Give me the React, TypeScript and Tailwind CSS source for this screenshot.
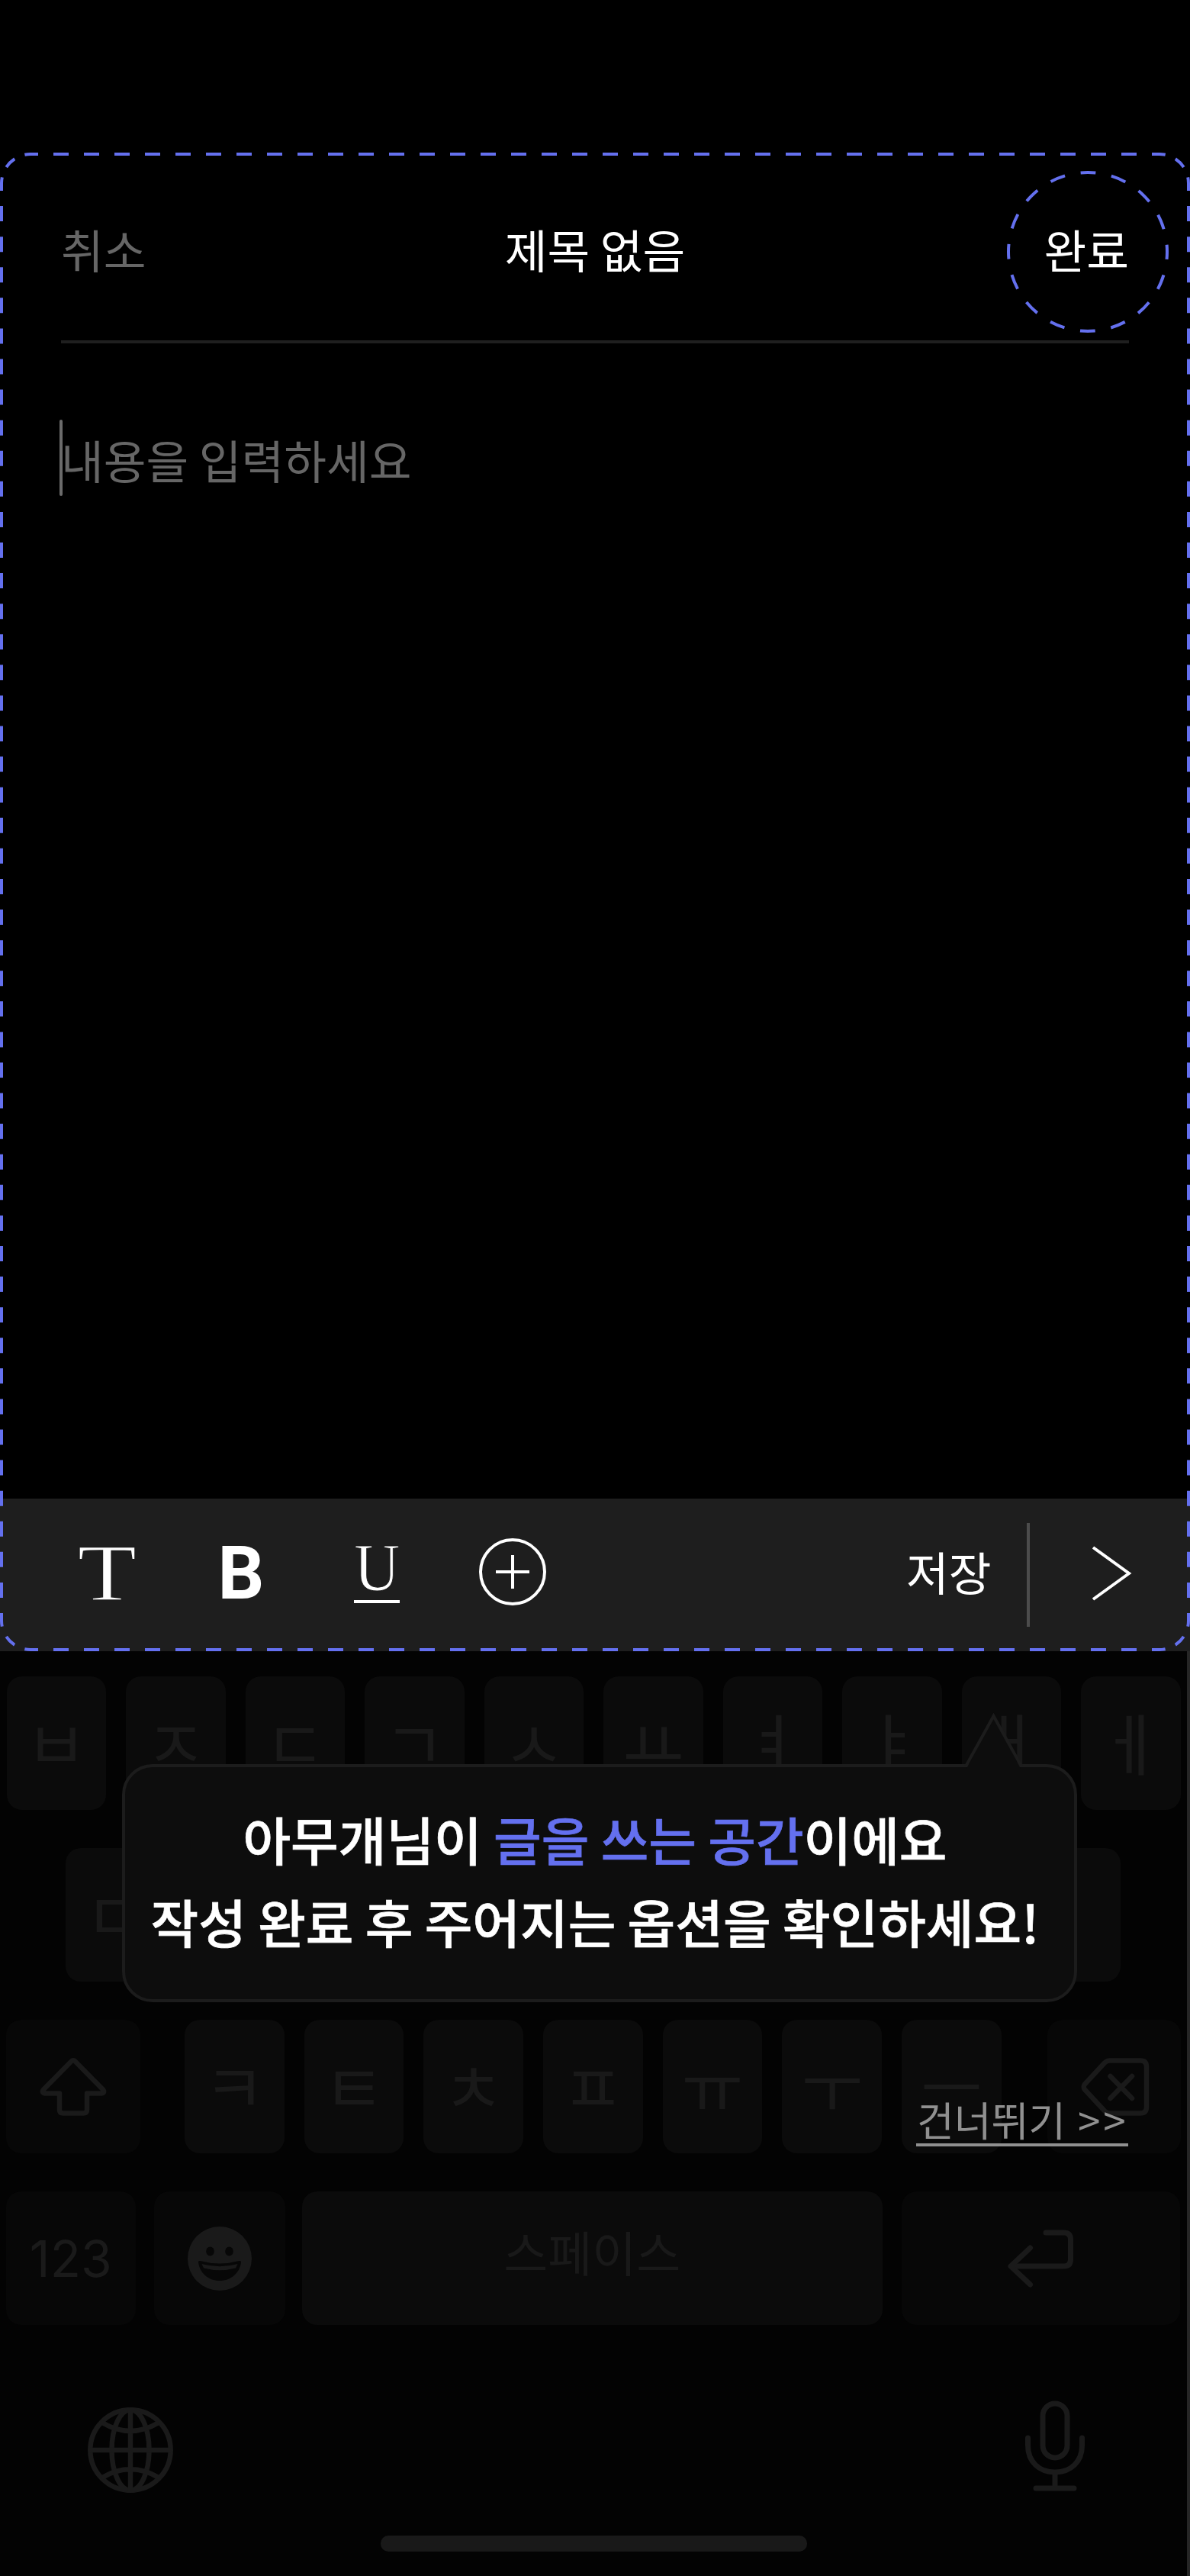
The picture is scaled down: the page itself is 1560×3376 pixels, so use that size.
import React from "react";

const KR = "font-['Noto_Sans_CJK_KR',sans-serif]";

function DashedFrame() {
  const line = { stroke: "#6470EF", strokeWidth: 4, fill: "none" };
  return (
    <svg
      className="pointer-events-none absolute left-0 top-0"
      width="1560"
      height="1964"
      viewBox="0 0 1560 1964"
    >
      <g {...line} strokeDasharray="20 20" strokeDashoffset="10">
        <path d="M40 2H1520" />
        <path d="M40 1962H1520" />
      </g>
      <g {...line} strokeDasharray="20 20.085" strokeDashoffset="10">
        <path d="M2 40V1924" />
        <path d="M1558 40V1924" />
      </g>
      <g {...line} strokeDasharray="15.5 14.34" strokeDashoffset="7.75">
        <path d="M2 40A38 38 0 0 1 40 2" />
        <path d="M1520 2A38 38 0 0 1 1558 40" />
        <path d="M1558 1924A38 38 0 0 1 1520 1962" />
        <path d="M40 1962A38 38 0 0 1 2 1924" />
      </g>
      <circle
        {...line}
        cx="1426"
        cy="130"
        r="104"
        strokeDasharray="20 20.84"
        strokeDashoffset="10"
      />
    </svg>
  );
}

function PlusCircle() {
  return (
    <svg width="88" height="88" viewBox="0 0 88 88" fill="none" stroke="#fff" strokeWidth="4">
      <circle cx="44" cy="44" r="42" />
      <path d="M22 44H66M44 22V66" />
    </svg>
  );
}

function Key({
  children,
  className = "w-[130.5px]",
  dark = false,
}: {
  children?: React.ReactNode;
  className?: string;
  dark?: boolean;
}) {
  return (
    <div
      className={`flex h-[175px] shrink-0 items-center justify-center rounded-[20px] ${
        dark ? "bg-[#070707]" : "bg-[#0b0b0b]"
      } ${className}`}
    >
      {children}
    </div>
  );
}

function Jamo({ children }: { children: string }) {
  return <span className={`${KR} mb-2 text-[88px] leading-none text-[#191919]`}>{children}</span>;
}

const ICON = "#1a1a1a";

function Keyboard() {
  return (
    <section className="relative h-[1212px] bg-[#030303] border-r-4 border-[#262626]">
      <div className="flex flex-col gap-[50px] pt-[33px]">
        <div className="flex gap-[26px] pl-[8.5px]">
          {["ㅂ", "ㅈ", "ㄷ", "ㄱ", "ㅅ", "ㅛ", "ㅕ", "ㅑ", "ㅐ", "ㅔ"].map((k) => (
            <Key key={k}>
              <Jamo>{k}</Jamo>
            </Key>
          ))}
        </div>
        <div className="flex gap-[26px] pl-[86px]">
          {["ㅁ", "ㄴ", "ㅇ", "ㄹ", "ㅎ", "ㅗ", "ㅓ", "ㅏ", "ㅣ"].map((k) => (
            <Key key={k}>
              <Jamo>{k}</Jamo>
            </Key>
          ))}
        </div>
        <div className="flex pl-2">
          <Key dark className="mr-[58.5px] w-[175.5px]">
            <svg width="88" height="78" viewBox="0 0 88 78" fill="none" stroke={ICON} strokeWidth="6.5" strokeLinejoin="round">
              <path d="M41.5 5.5Q44 3 46.500 5.500L83 42.500Q86 46.500 81 47.500H62V69Q62 73.500 57.500 73.500H30.500Q26 73.500 26 69V47.500H7Q2 46.500 5 42.500Z" />
            </svg>
          </Key>
          <div className="flex gap-[26.2px]">
            {["ㅋ", "ㅌ", "ㅊ", "ㅍ", "ㅠ", "ㅜ", "ㅡ"].map((k) => (
              <Key key={k}>
                <Jamo>{k}</Jamo>
              </Key>
            ))}
          </div>
          <Key dark className="ml-[60px] w-[175px]">
            <svg width="90" height="76" viewBox="0 0 90 76" fill="none" stroke={ICON} strokeWidth="6.500" strokeLinecap="round" strokeLinejoin="round" className="-mr-1">
              <path d="M38 3.500H78Q86 3.500 86 11.500V64.500Q86 72.500 78 72.500H38Q34 72.500 31 69.500L5 41.500Q2.500 38 5 34.500L31 6.500Q34 3.500 38 3.500Z" />
              <path d="M38.500 24L67 53M67 24L38.500 53" />
            </svg>
          </Key>
        </div>
        <div className="flex pl-2">
          <Key dark className="mr-6 w-[169.500px]">
            <span className="font-['Inter',sans-serif] text-[66px] leading-none text-[#1a1a1a]">123</span>
          </Key>
          <Key dark className="mr-[22px] w-[172.500px]">
            <svg width="84" height="84" viewBox="0 0 84 84">
              <circle cx="42" cy="42" r="42" fill={ICON} />
              <ellipse cx="29.500" cy="32.500" rx="5.300" ry="6" fill="#070707" />
              <ellipse cx="54.500" cy="32.500" rx="5.300" ry="6" fill="#070707" />
              <path d="M14 47Q13.500 44.500 16.500 45Q42 52 67.500 45Q70.500 44.500 70 47C68 61 57 71 42 71S16 61 14 47Z" fill="#070707" />
              <path d="M18.500 49Q42 55.500 65.500 49L63 54.500Q42 60 21 54.500Z" fill={ICON} />
            </svg>
          </Key>
          <Key className="mr-[25.500px] w-[760.500px]">
            <span className={`${KR} mb-[20px] text-[63px] leading-none text-[#191919]`}>스페이스</span>
          </Key>
          <Key dark className="w-[364.500px]">
            <svg width="88" height="78" viewBox="0 0 88 78" fill="none" stroke={ICON} strokeWidth="7" strokeLinecap="round" strokeLinejoin="round">
              <path d="M51 5H74.500Q83.500 5 83.500 14V40Q83.500 49 74.500 49H6" />
              <path d="M30.500 25L5 49L30.500 73" />
            </svg>
          </Key>
        </div>
      </div>

      <div className="mt-[98px] flex justify-between pl-[115px] pr-[134px]">
        <svg width="112" height="112" viewBox="0 0 112 112" fill="none" stroke={ICON} strokeWidth="6.500" className="mt-[10px]">
          <circle cx="56" cy="56" r="52.700" />
          <ellipse cx="56" cy="56" rx="24.500" ry="52.700" />
          <path d="M56 3V109M3 56H109M19 20Q56 42 93 20M19 92Q56 70 93 92" />
        </svg>
        <svg width="78" height="120" viewBox="0 0 78 120" fill="none" stroke={ICON} strokeWidth="7" strokeLinecap="round">
          <rect x="23" y="5" width="32" height="71" rx="16" />
          <path d="M3.500 50V60C3.500 81 18 95 39 95S74.500 81 74.500 60V50M39 95V116M14 116H64" />
        </svg>
      </div>
      <div className="absolute left-[499px] top-[1159px] h-[21px] w-[559px] rounded-[10px] bg-[#191919]" />

      <div className="absolute left-[160px] top-[148px] flex h-[312px] w-[1252px] flex-col items-center rounded-[40px] border-4 border-[#1c1c1c] bg-[#0d0d0d]">
        <svg className="absolute left-[1098px] top-[-72px]" width="84" height="76" viewBox="0 0 84 76">
          <path d="M4 76L40.500 5L77 76Z" fill="#0d0d0d" />
          <path d="M4.500 70L40.500 5L76.500 70" fill="none" stroke="#1c1c1c" strokeWidth="4" />
        </svg>
        <div className={`${KR} mr-3 mt-10 whitespace-nowrap text-center text-[68.1px] font-medium leading-[108px] text-white [-webkit-text-stroke:0.7px_currentColor]`}>
          <p>
            아무개님이 <span className="text-[#6470EF]">글을 쓰는 공간</span>이에요
          </p>
          <p>작성 완료 후 주어지는 옵션을 확인하세요!</p>
        </div>
      </div>

      <button className={`${KR} absolute left-[1201px] top-[581px] w-[278px] whitespace-nowrap border-b-4 border-[#909090] pl-px text-left text-[53px] leading-[64px] text-[#909090]`}>
        건너뛰기<span className="tracking-[4px]"> &gt;&gt;</span>
      </button>
    </section>
  );
}

export default function App() {
  return (
    <main className={`${KR} h-[3376px] w-[1560px] overflow-hidden bg-black pt-[200px]`}>
      <section className="relative flex h-[1964px] flex-col">
        <header className="mx-20 flex h-[250px] items-center justify-between border-b-4 border-[#1f1f1f] pt-[6px] text-[60.6px] leading-[88px] text-white">
          <span className="w-[300px] text-[#666]">취소</span>
          <h1 className="font-normal">제목 없음</h1>
          <span className="w-[300px] text-right">완료</span>
        </header>
        <div className="ml-[78px] mt-[100px] flex h-[100px] items-center">
          <span className="h-[100px] w-1 rounded-full bg-[#6b6b6b]" />
          <span className="-ml-0.5 mt-1 text-[60.6px] leading-[88px] text-[#666]">내용을 입력하세요</span>
        </div>
        <div className="mt-auto flex h-[200px] items-center bg-[#1e1e1e] pb-2 text-white">
          <span className="ml-[104px] mt-[3px] flex w-[72px] justify-center font-['Liberation_Serif',serif] text-[106px] leading-none [-webkit-text-stroke:1.5px_#1e1e1e]">
            <span className="scale-x-[1.2]">T</span>
          </span>
          <span className="ml-[112px] mt-[6px] flex w-[56px] justify-center font-['Roboto',sans-serif] text-[95.500px] font-bold leading-none">B</span>
          <span className="ml-[120px] mt-[2px] flex h-[80px] w-[60px] flex-col items-center border-b-4 border-white font-['Liberation_Serif',serif] text-[89px] leading-[66px] [-webkit-text-stroke:1px_#1e1e1e]">
            <span className="scale-x-[0.93]">U</span>
          </span>
          <span className="ml-[104px]">
            <PlusCircle />
          </span>
          <span className="mb-[3px] ml-[472px] w-[110px] whitespace-nowrap text-[60.6px] leading-[88px]">저장</span>
          <span className="ml-[48px] mt-2 h-[136px] w-1 bg-[#4c4c4c]" />
          <svg className="ml-[80px] mt-[3px]" width="56" height="76" viewBox="0 0 56 76" fill="none" stroke="#fff" strokeWidth="4">
            <path d="M3 4L50 38L3 72" />
          </svg>
        </div>
        <DashedFrame />
      </section>
      <Keyboard />
    </main>
  );
}
